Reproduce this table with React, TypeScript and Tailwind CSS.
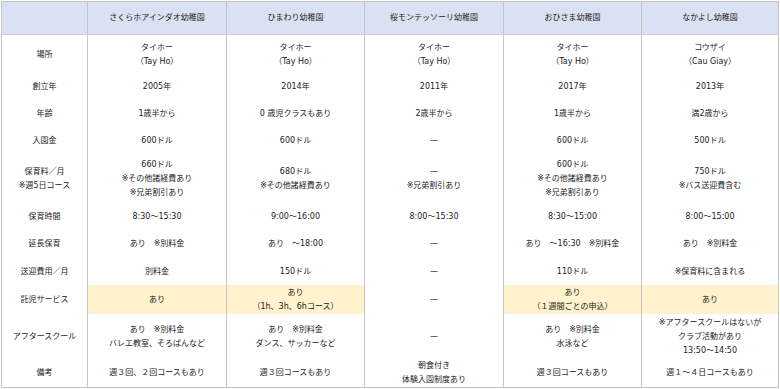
import React from "react";

type Cell = { lines: string[]; hl?: boolean };
type Row = { label: string[]; cells: Cell[] };

const heads = [
  "さくらホアインダオ幼稚園",
  "ひまわり幼稚園",
  "桜モンテッソーリ幼稚園",
  "おひさま幼稚園",
  "なかよし幼稚園",
];

const c = (...lines: string[]): Cell => ({ lines });
const y = (...lines: string[]): Cell => ({ lines, hl: true });

const rows: Row[] = [
  { label: ["場所"], cells: [c("タイホー", "（Tay Ho）"), c("タイホー", "（Tay Ho）"), c("タイホー", "（Tay Ho）"), c("タイホー", "（Tay Ho）"), c("コウザイ", "（Cau Giay）")] },
  { label: ["創立年"], cells: [c("2005年"), c("2014年"), c("2011年"), c("2017年"), c("2013年")] },
  { label: ["年齢"], cells: [c("1歳半から"), c("0 歳児クラスもあり"), c("2歳半から"), c("1歳半から"), c("満2歳から")] },
  { label: ["入園金"], cells: [c("600ドル"), c("600ドル"), c("—"), c("600ドル"), c("500ドル")] },
  { label: ["保育料／月", "※週5日コース"], cells: [c("660ドル", "※その他諸経費あり", "※兄弟割引あり"), c("680ドル", "※その他諸経費あり"), c("—", "※兄弟割引あり"), c("600ドル", "※その他諸経費あり", "※兄弟割引あり"), c("750ドル", "※バス送迎費含む")] },
  { label: ["保育時間"], cells: [c("8:30～15:30"), c("9:00～16:00"), c("8:00～15:30"), c("8:30～15:00"), c("8:00～15:00")] },
  { label: ["延長保育"], cells: [c("あり　※別料金"), c("あり　～18:00"), c("—"), c("あり　～16:30　※別料金"), c("あり　※別料金")] },
  { label: ["送迎費用／月"], cells: [c("別料金"), c("150ドル"), c("—"), c("110ドル"), c("※保育料に含まれる")] },
  { label: ["託児サービス"], cells: [y("あり"), y("あり", "（1h、3h、6hコース）"), c("—"), y("あり", "（１週間ごとの申込）"), y("あり")] },
  { label: ["アフタースクール"], cells: [c("あり　※別料金", "バレエ教室、そろばんなど"), c("あり　※別料金", "ダンス、サッカーなど"), c("—"), c("あり　※別料金", "水泳など"), c("※アフタースクールはないが", "クラブ活動があり", "13:50～14:50")] },
  { label: ["備考"], cells: [c("週３回、２回コースもあり"), c("週３回コースもあり"), c("朝食付き", "体験入園制度あり"), c("週３回コースもあり"), c("週１～４日コースもあり")] },
];

export default function App() {
  return (
    <div
      className="w-[780px] h-[389px] overflow-hidden bg-white pl-px pt-px text-[#222222] text-[8px] leading-[14px]"
      style={{ fontFamily: '"DejaVu Sans", "Noto Sans CJK JP", sans-serif' }}
    >
      <div className="w-[778px] border border-[#c4c4c4] grid grid-cols-[86px_139px_138px_139px_138px_136px] grid-rows-[33px_39px_26px_28px_26px_50px_26px_28px_27px_29px_45px_28px]">
        <div className="bg-[#dae1f2] border-r border-b border-r-[#c4c4c4] border-b-[#c9cfdd]" />
        {heads.map((h, i) => (
          <div
            key={h}
            className={`bg-[#dae1f2] border-b border-b-[#c9cfdd] flex items-center justify-center ${i < 4 ? "border-r border-r-[#c4c4c4]" : ""}`}
          >
            {h}
          </div>
        ))}
        {rows.map((r) => (
          <React.Fragment key={r.label[0]}>
            <div className="border-r border-[#c4c4c4] flex flex-col items-center justify-center text-center">
              {r.label.map((l) => (
                <div key={l}>{l}</div>
              ))}
            </div>
            {r.cells.map((cell, i) => (
              <div
                key={i}
                className={`flex flex-col items-center justify-center text-center ${i < 4 ? "border-r border-[#c4c4c4]" : ""} ${cell.hl ? "bg-[#fff2cc]" : ""}`}
              >
                {cell.lines.map((l, j) => (
                  <div key={j} className="whitespace-pre h-[14px]">{l}</div>
                ))}
              </div>
            ))}
          </React.Fragment>
        ))}
      </div>
    </div>
  );
}
